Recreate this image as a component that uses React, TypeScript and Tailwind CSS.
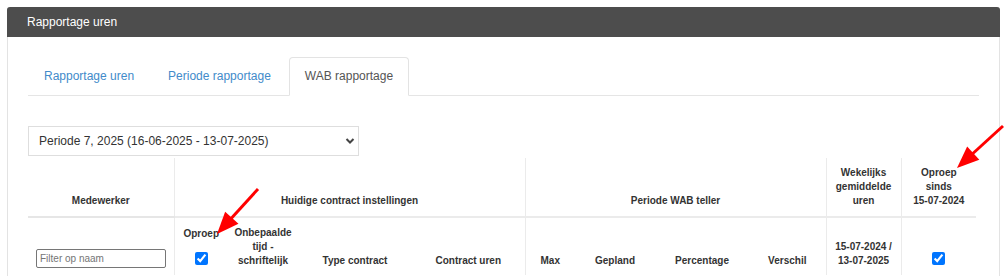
import { ChangeEvent } from 'react'

const thTop = 'align-bottom px-2 py-2 text-center font-bold text-[10px] leading-[14px] text-[#333] border-b-2 border-[#e6e6e6]'
const thSub = 'align-bottom px-2 pt-2 pb-[7px] text-center font-bold text-[10px] leading-[14px] text-[#333]'
const sep = 'border-l border-[#ebebeb]'

const Arrow = ({ from, to }: { from: [number, number]; to: [number, number] }) => {
  const dx = to[0] - from[0]
  const dy = to[1] - from[1]
  const len = Math.hypot(dx, dy)
  const ux = dx / len
  const uy = dy / len
  const bx = to[0] - ux * 22
  const by = to[1] - uy * 22
  const px = -uy * 9
  const py = ux * 9
  return (
    <g>
      <line x1={from[0]} y1={from[1]} x2={bx + ux * 2} y2={by + uy * 2} stroke="#ff0000" strokeWidth={3} />
      <polygon points={`${to[0]},${to[1]} ${bx + px},${by + py} ${bx - px},${by - py}`} fill="#ff0000" />
    </g>
  )
}

const App = () => {
  const noop = (_e: ChangeEvent<HTMLInputElement>) => {}

  return (
    <div className="relative p-[7px] bg-white font-['Liberation_Sans',Arial,sans-serif] text-[#333]">
      <section className="border-x border-b border-[#e3e3e3] rounded-t-[3px]">
        <header className="h-[30px] -mx-px bg-[#4d4d4d] rounded-t-[3px] px-5 flex items-center text-[12px] text-white">
          Rapportage uren
        </header>

        <div className="px-5 pt-5 pb-10">
          <ul className="flex border-b border-[#e5e5e5] text-[12px]">
            <li className="-mb-px mr-[2px]">
              <a className="block border border-transparent px-[15px] py-[10px] leading-[17px] text-[#428bca]">Rapportage uren</a>
            </li>
            <li className="-mb-px mr-[2px]">
              <a className="block border border-transparent px-[15px] py-[10px] leading-[17px] text-[#428bca]">Periode rapportage</a>
            </li>
            <li className="-mb-px mr-[2px]">
              <a className="block rounded-t border border-[#e3e3e3] border-b-white bg-white px-[15px] py-[10px] leading-[17px] text-[#555]">WAB rapportage</a>
            </li>
          </ul>

          <div className="relative mt-[30px] w-[331px]">
            <select className="appearance-none w-full h-[30px] border border-[#dedede] bg-white pl-[10px] text-[12px] text-[#333] outline-none">
              <option>Periode 7, 2025 (16-06-2025 - 13-07-2025)</option>
            </select>
            <svg className="absolute right-[4px] top-[11px] pointer-events-none" width="10" height="8" viewBox="0 0 10 8">
              <path d="M1.5 2 L5 5.5 L8.5 2" fill="none" stroke="#444" strokeWidth="2" />
            </svg>
          </div>

          <table className="mt-[2px] w-[948px] table-fixed border-collapse">
            <colgroup>
              <col className="w-[146px]" />
              <col className="w-[54px]" />
              <col className="w-[70px]" />
              <col className="w-[114px]" />
              <col className="w-[113px]" />
              <col className="w-[50px]" />
              <col className="w-[80px]" />
              <col className="w-[94px]" />
              <col className="w-[77px]" />
              <col className="w-[75px]" />
              <col className="w-[75px]" />
            </colgroup>
            <thead>
              <tr>
                <th className={thTop}>Medewerker</th>
                <th colSpan={4} className={`${thTop} ${sep}`}>Huidige contract instellingen</th>
                <th colSpan={4} className={`${thTop} ${sep}`}>Periode WAB teller</th>
                <th className={`${thTop} ${sep}`}>Wekelijks<br />gemiddelde<br />uren</th>
                <th className={`${thTop} ${sep}`}>Oproep<br />sinds<br />15-07-2024</th>
              </tr>
              <tr>
                <th className={`${thSub} text-left`}>
                  <input
                    type="text"
                    placeholder="Filter op naam"
                    className="block w-full h-[19px] rounded-[2px] border border-[#767676] px-[3px] text-[10px] font-normal placeholder:text-[#757575] outline-none"
                  />
                </th>
                <th className={`${thSub} ${sep} px-1`}>
                  <div>Oproep</div>
                  <div className="mt-[11px] mb-[3px] flex justify-center">
                    <input type="checkbox" checked onChange={noop} className="m-0 w-[13px] h-[13px] accent-[#0075ff]" />
                  </div>
                </th>
                <th className={`${thSub} px-[6px]`}>Onbepaalde<br />tijd -<br />schriftelijk</th>
                <th className={thSub}>Type contract</th>
                <th className={thSub}>Contract uren</th>
                <th className={`${thSub} ${sep}`}>Max</th>
                <th className={thSub}>Gepland</th>
                <th className={thSub}>Percentage</th>
                <th className={thSub}>Verschil</th>
                <th className={`${thSub} ${sep}`}>15-07-2024 /<br />13-07-2025</th>
                <th className={`${thSub} ${sep}`}>
                  <div className="mb-[3px] flex justify-center">
                    <input type="checkbox" checked onChange={noop} className="m-0 w-[13px] h-[13px] accent-[#0075ff]" />
                  </div>
                </th>
              </tr>
            </thead>
          </table>
        </div>
      </section>

      <svg className="absolute left-0 top-0 pointer-events-none" width="1007" height="276" viewBox="0 0 1007 276">
        <Arrow from={[258, 189]} to={[217, 234]} />
        <Arrow from={[1003, 126]} to={[957, 168]} />
      </svg>
    </div>
  )
}

export default App
